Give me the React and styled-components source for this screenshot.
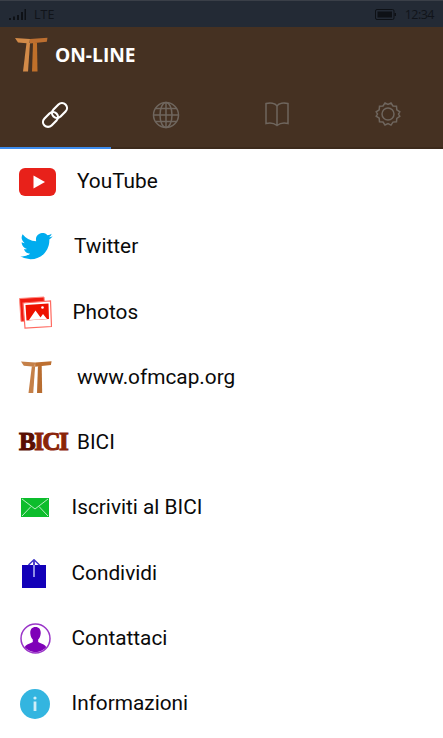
import React from "react";
import styled, { createGlobalStyle } from "styled-components";

const Global = createGlobalStyle`
  html, body { margin: 0; padding: 0; background: #fff; }
  #root { width: 443px; height: 738px; overflow: hidden; }
`;
const Page = styled.div`display: flex; flex-direction: column; width: 443px; height: 738px; background: #fff; font-family: Roboto, sans-serif;`;
const StatusBar = styled.div`
  display: flex; align-items: center; height: 27px; box-sizing: border-box; padding: 1px 9px 0 9px;
  background: #232a35; color: #0e1116; border-top: 1px solid #3a3f48;
  font: 12.5px "Open Sans", sans-serif;
`;
const StatusLabel = styled.span`margin-left: 8px; opacity: .85;`;
const Spacer = styled.div`flex: 1;`;
const Clock = styled.span`margin-left: 9px; letter-spacing: -.5px; opacity: .85;`;
const Header = styled.header`background: #453122;`;
const Brand = styled.div`display: flex; align-items: center; height: 56px; padding-left: 15px;`;
const Title = styled.h1`margin: 0 0 1px 6px; color: #fff; font: 700 19.2px "Open Sans", sans-serif;`;
const Tabs = styled.nav`display: grid; grid-template-columns: repeat(4, 1fr); height: 65px; border-bottom: 1px solid #c9c7c4;`;
const Tab = styled.div`
  display: flex; align-items: flex-start; justify-content: center; padding-top: 18px; box-sizing: border-box;
  color: ${p => p.$active ? "#fff" : "#6f665e"};
  border-bottom: 2px solid ${p => p.$active ? "#3d8df0" : "#3c2a1c"};
  margin-bottom: -1px;
`;
const List = styled.ul`list-style: none; margin: 0; padding: 0; flex: 1;`;
const Row = styled.li`display: flex; align-items: center; height: 65.25px; padding-left: 19px; box-sizing: border-box;`;
const IconSlot = styled.div`display: flex; align-items: center; width: ${p => p.$w}px; padding-left: ${p => p.$offset || 0}px; box-sizing: border-box; flex: none;`;
const Label = styled.span`font-size: 20.8px; color: #0a0a0a; line-height: 1;`;
const BiciMark = styled.span`
  display: block; height: 18px; margin-top: -2px;
  font: 700 25px/18px "Liberation Serif", serif; letter-spacing: -1.5px; color: #8a2409;
  -webkit-text-stroke: 1.1px currentColor;
`;
const BiciFirst = styled.span`color: #5a0f02;`;

const Tau = ({ w = 34, h = 36, a = "#d28a48", b = "#c0702a" }) => (
  <svg width={w} height={h} viewBox="0 0 34 36">
    <path d="M0 1 L15 2 L14.500 6.500 L3 5.500 Z" fill={a} />
    <path d="M15 2 L32.500 .8 L31.800 4.800 L15 6.500 Z" fill="#bd6f30" />
    <path d="M11.500 6 L15 6 L13 34.500 L8 34.500 Z" fill={a} />
    <path d="M18 6 L22 5.500 L22.500 34.500 L17 34.500 Z" fill={b} />
  </svg>
);

const LinkIcon = () => (
  <svg width="28" height="28" viewBox="0 0 28 28" fill="none" stroke="currentColor" strokeWidth="2.2">
    <rect x="10" y="4.500" width="17" height="10" rx="5" transform="rotate(-45 18.500 9.500)" />
    <rect x="1" y="13.500" width="17" height="10" rx="5" transform="rotate(-45 9.500 18.500)" />
  </svg>
);
const Globe = () => (
  <svg width="28" height="28" viewBox="0 0 28 28" fill="none" stroke="currentColor" strokeWidth="1.5">
    <circle cx="14" cy="14" r="12.500" />
    <ellipse cx="14" cy="14" rx="6" ry="12.500" />
    <path d="M14 1.500v25M1.500 14h25M3.500 7.500h21M3.500 20.500h21" />
  </svg>
);
const Book = () => (
  <svg width="26" height="26" viewBox="0 0 26 26" fill="none" stroke="currentColor" strokeWidth="1.500">
    <path d="M13 5C11 2 6 1.500 2 2.500V22.500C6 21.500 10 22 13 24.500C16 22 20 21.500 24 22.500V2.500C20 1.500 15 2 13 5V24.500" />
  </svg>
);
const Gear = () => (
  <svg width="26" height="26" viewBox="0 0 26 26" fill="none" stroke="currentColor" strokeWidth="1.500">
    <path d="M10 2l3 1.500L16 2l2 3 3.500.3.3 3.500 3 2-1.300 2.200 1.300 2.300-3 2-.3 3.500-3.500.3-2 3-3-1.500L10 24l-2-3-3.500-.3-.3-3.500-3-2L2.500 13 1.200 10.800l3-2 .3-3.500L8 5z" />
    <circle cx="13" cy="13" r="6" />
  </svg>
);

const YouTube = () => (
  <svg width="37" height="28" viewBox="0 0 37 28">
    <rect width="37" height="28" rx="6" fill="#e8211a" />
    <path d="M14.500 7.500L26 14 14.500 20.500Z" fill="#fff" />
  </svg>
);
const Twitter = () => (
  <svg width="33" height="27" viewBox="0 0 24 20">
    <path fill="#00acee" d="M24 2.400a9.800 9.800 0 0 1-2.800.8A4.900 4.900 0 0 0 23.300.5a9.800 9.800 0 0 1-3.100 1.200A4.900 4.900 0 0 0 11.800 6.200 13.900 13.900 0 0 1 1.700.9a4.900 4.900 0 0 0 1.500 6.600 4.900 4.900 0 0 1-2.200-.6c0 2.400 1.700 4.400 3.900 4.900a4.900 4.900 0 0 1-2.200.1 4.900 4.900 0 0 0 4.600 3.400A9.900 9.900 0 0 1 0 17.300 13.900 13.900 0 0 0 7.500 19.500c9.100 0 14.300-7.700 14-14.600A10 10 0 0 0 24 2.400z" />
  </svg>
);
const Photos = () => (
  <svg width="33" height="33" viewBox="0 0 33 33">
    <path d="M.5 2.500 L25 1 L25.500 6 L6 7 L7.500 25 L2 25.500Z" fill="#f01a10" stroke="#ff8a80" strokeWidth="1" />
    <path d="M4 7 L31.500 5 L32.500 30.500 L6 32Z" fill="#fff" stroke="#ff6a60" strokeWidth="1.200" />
    <path d="M6.500 9 L29.500 7.500 L30 23 L7.500 24.500Z" fill="#ee1100" />
    <path d="M10 24L16.500 14.500 23 23.500ZM20 23.500 L24 18 L28 23Z" fill="#fff" />
    <circle cx="23.500" cy="11.500" r="1.300" fill="#fff" />
  </svg>
);
const Mail = () => (
  <svg width="28" height="19" viewBox="0 0 28 19">
    <rect width="28" height="19" fill="#0cbd2c" />
    <path d="M1 1L14 11 27 1M1 18L10 8.500M27 18L18 8.500" stroke="#b7ecc0" strokeWidth="1" fill="none" />
  </svg>
);
const Share = () => (
  <svg width="24" height="29" viewBox="0 0 24 29">
    <rect y="6" width="24" height="23" fill="#1200b8" />
    <path d="M12 18V6" stroke="#b9bdf5" strokeWidth="1.500" fill="none" />
    <path d="M12 6V1.500" stroke="#1200b8" strokeWidth="1.500" fill="none" />
    <path d="M6.500 6L12 .8 17.500 6" stroke="#3a30c8" strokeWidth="1.500" fill="none" />
  </svg>
);
const Person = () => (
  <svg width="31" height="31" viewBox="0 0 31 31">
    <circle cx="15.500" cy="15.500" r="14.500" fill="#fff" stroke="#9a35c8" strokeWidth="1.500" />
    <path d="M15.500 4c-3.800 0-5.500 2.800-5.200 6.500.2 2.800 1.400 5 2.500 6v2.500c-2 1.400-6.800 2-8 5.200a14 14 0 0 0 21.400 0c-1.200-3.200-6-3.800-8-5.200v-2.500c1.100-1 2.300-3.200 2.500-6 .3-3.700-1.400-6.500-5.200-6.500z" fill="#7f02b8" />
  </svg>
);
const Info = () => (
  <svg width="30" height="30" viewBox="0 0 30 30">
    <circle cx="15" cy="15" r="15" fill="#33b5e0" />
    <circle cx="15" cy="9" r="1.600" fill="#cfeef8" />
    <rect x="13.600" y="12.500" width="2.800" height="9.500" fill="#cfeef8" />
  </svg>
);

const rows = [
  ["YouTube", <YouTube />, 58, 0],
  ["Twitter", <Twitter />, 55, 1],
  ["Photos", <Photos />, 53.5, 0],
  ["www.ofmcap.org", <Tau w={32} h={35} a="#c58048" b="#b86d30" />, 58, 2],
  ["BICI", <BiciMark><BiciFirst>B</BiciFirst>ICI</BiciMark>, 58, 0],
  ["Iscriviti al BICI", <Mail />, 52.5, 2],
  ["Condividi", <Share />, 52.5, 3],
  ["Contattaci", <Person />, 52.5, 1],
  ["Informazioni", <Info />, 52.5, 1],
];

export default function App() {
  return (
    <Page>
      <Global />
      <StatusBar>
        <svg width="17" height="12" viewBox="0 0 17 12" fill="#0e1116">
          <rect x="0" y="9" width="2" height="2" /><rect x="4" y="7.500" width="2" height="3.500" /><rect x="8" y="6" width="2" height="5" /><rect x="12" y="3" width="2" height="8" /><rect x="15.500" y="0" width="1.500" height="11" />
        </svg>
        <StatusLabel>LTE</StatusLabel>
        <Spacer />
        <svg width="21" height="11" viewBox="0 0 21 11">
          <rect x=".5" y=".5" width="18.500" height="10" rx="1.500" fill="none" stroke="#0e1116" />
          <rect x="2.500" y="2.500" width="14.500" height="6" fill="#0e1116" />
          <rect x="19.500" y="4" width="1.500" height="3" fill="#0e1116" />
        </svg>
        <Clock>12:34</Clock>
      </StatusBar>
      <Header>
        <Brand>
          <Tau />
          <Title>ON-LINE</Title>
        </Brand>
        <Tabs>
          <Tab $active><LinkIcon /></Tab>
          <Tab><Globe /></Tab>
          <Tab><Book /></Tab>
          <Tab><Gear /></Tab>
        </Tabs>
      </Header>
      <List>
        {rows.map(([t, icon, w, offset]) => (
          <Row key={t}>
            <IconSlot $w={w} $offset={offset}>{icon}</IconSlot>
            <Label>{t}</Label>
          </Row>
        ))}
      </List>
    </Page>
  );
}
